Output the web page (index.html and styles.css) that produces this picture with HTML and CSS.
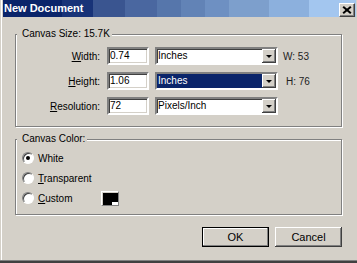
FILE: index.html
```html
<!DOCTYPE html>
<html lang="en">
<head>
    <meta charset="UTF-8">
    <meta name="viewport" content="width=device-width, initial-scale=1.0">
    <title>New Document</title>
    <link rel="stylesheet" href="styles.css">
</head>
<body>
    <div class="window">
        <div class="titlebar">
            <span class="title">New Document</span>
            <span class="close"><span class="close-x"></span></span>
        </div>

        <div class="content">
            <div class="group size">
                <span class="legend">Canvas Size: 15.7K</span>
                <div class="rows">
                    <span class="lbl"><u>W</u>idth:</span>
                    <div class="field">0.74</div>
                    <div class="select"><span class="val">Inches</span><span class="arrow"></span></div>
                    <span class="info">W: 53</span>

                    <span class="lbl"><u>H</u>eight:</span>
                    <div class="field">1.06</div>
                    <div class="select"><span class="val picked">Inches</span><span class="arrow"></span></div>
                    <span class="info info-h">H: 76</span>

                    <span class="lbl"><u>R</u>esolution:</span>
                    <div class="field">72</div>
                    <div class="select"><span class="val">Pixels/Inch</span><span class="arrow"></span></div>
                    <span class="info"></span>
                </div>
            </div>

            <div class="group color">
                <span class="legend">Canvas Color:</span>
                <div class="radio-row">
                    <span class="radio checked"></span>
                    <span class="radio-text">White</span>
                </div>
                <div class="radio-row">
                    <span class="radio"></span>
                    <span class="radio-text"><u>T</u>ransparent</span>
                </div>
                <div class="radio-row">
                    <span class="radio"></span>
                    <span class="radio-text custom-text"><u>C</u>ustom</span>
                    <span class="swatch"></span>
                </div>
            </div>

            <div class="buttons">
                <div class="btn default">OK</div>
                <div class="btn">Cancel</div>
            </div>
        </div>
    </div>
</body>
</html>
```

FILE: styles.css
```css
html, body {
    overflow: hidden;
}

body {
    margin: 0;
    padding: 0;
    background-color: #d4d0c8;
    font-family: "Liberation Sans", Arial, sans-serif;
    font-size: 10px;
    color: #000;
}

.window {
    width: 357px;
    height: 263px;
    box-sizing: border-box;
    padding-left: 3px;
    overflow: hidden;
    background-color: #d4d0c8;
    box-shadow: inset 0 -1px #404040, inset 0 -2px #404040, inset 0 -3px #808080, inset 1px 0 #d4d0c8, inset 2px 0 #fff;
}

/* Barra de titulo */
.titlebar {
    height: 17px;
    margin-right: 1px;
    display: flex;
    justify-content: space-between;
    align-items: flex-start;
    padding: 0 1px;
    background: linear-gradient(to right,
        #0a246a 0px, #0a246a 59px,
        #183378 59px, #183378 90px,
        #3a5590 90px, #3a5590 122px,
        #4a67a0 122px, #4a67a0 154px,
        #5676ab 154px, #5676ab 178px,
        #6283b6 178px, #6283b6 202px,
        #6e90c2 202px, #6e90c2 226px,
        #7d9fcc 226px, #7d9fcc 266px,
        #8cb0dd 266px, #8cb0dd 306px,
        #a3c6ef 306px);
}

.title {
    color: #fff;
    font-weight: bold;
    font-size: 11px;
    line-height: 17px;
}

.close {
    position: relative;
    flex: none;
    width: 16px;
    height: 14px;
    margin-top: 3px;
    box-sizing: border-box;
    border: 1px solid;
    border-color: #fff #404040 #404040 #fff;
    box-shadow: inset -1px -1px #808080;
    background-color: #d4d0c8;
}

/* X do botao fechar */
.close-x::before,
.close-x::after {
    content: "";
    position: absolute;
    left: 2px;
    top: 5px;
    width: 10px;
    height: 2px;
    background-color: #000;
    transform: rotate(40deg);
}

.close-x::after {
    transform: rotate(-40deg);
}

.content {
    padding: 17px 15px 0 12px;
}

/* Grupos */
.group {
    position: relative;
    border: 1px solid #808080;
    box-shadow: inset 1px 1px #fff, 1px 1px #fff;
}

.legend {
    position: absolute;
    top: -7px;
    left: 1px;
    padding: 0 2px 0 5px;
    line-height: 12px;
    background-color: #d4d0c8;
}

.size {
    padding: 12px 0 11px;
}

.rows {
    display: grid;
    grid-template-columns: 84px 49px 129px 1fr;
    grid-auto-rows: 18px;
    row-gap: 7px;
    align-items: center;
}

.lbl {
    text-align: right;
}

.field {
    width: 42px;
    height: 18px;
    margin-left: 7px;
    box-sizing: border-box;
    padding-left: 1px;
    line-height: 14px;
    background-color: #fff;
    border: 2px solid;
    border-color: #808080 #fff #fff #808080;
    box-shadow: inset 1px 1px #404040, inset -1px -1px #d4d0c8;
}

.select {
    width: 123px;
    height: 18px;
    margin-left: 6px;
    box-sizing: border-box;
    display: flex;
    background-color: #fff;
    border: 2px solid;
    border-color: #808080 #fff #fff #808080;
    box-shadow: inset 1px 1px #404040;
}

.val {
    flex: 1;
    padding-left: 1px;
    line-height: 14px;
}

.val.picked {
    background-color: #0a246a;
    color: #fff;
}

.arrow {
    width: 14px;
    height: 14px;
    box-sizing: border-box;
    display: flex;
    align-items: center;
    justify-content: center;
    background-color: #d4d0c8;
    box-shadow: inset -1px -1px #404040, inset 1px 1px #fff, inset -2px -2px #808080;
}

.arrow::after {
    content: "";
    border-left: 3px solid transparent;
    border-right: 3px solid transparent;
    border-top: 3px solid #000;
    margin-top: 1px;
}

.info {
    margin-left: 5px;
    color: #222;
}

.info-h {
    margin-left: 8px;
}

.color {
    margin-top: 12px;
    padding: 8px 0 6px 6px;
}

.radio-row {
    height: 20px;
    display: flex;
    align-items: center;
}

.radio {
    width: 12px;
    height: 12px;
    box-sizing: border-box;
    position: relative;
    border-radius: 50%;
    background-color: #fff;
    border: 1px solid;
    border-color: #808080 #fff #fff #808080;
    box-shadow: inset 1px 1px #404040;
}

.radio.checked::after {
    content: "";
    position: absolute;
    left: 3px;
    top: 3px;
    width: 4px;
    height: 4px;
    border-radius: 50%;
    background-color: #000;
}

.radio-text {
    margin-left: 4px;
}

.custom-text {
    width: 63px;
}

.swatch {
    width: 18px;
    height: 15px;
    box-sizing: border-box;
    position: relative;
    background-color: #000;
    border: 1px solid;
    border-color: #fff #808080 #808080 #fff;
    box-shadow: inset 1px 1px #d4d0c8;
}

.swatch::after {
    content: "";
    position: absolute;
    right: 0;
    bottom: 0;
    width: 5px;
    height: 2px;
    background-color: #fff;
    border-top: 1px solid #fff;
    border-left: 1px solid #fff;
}

/* Botoes */
.buttons {
    display: flex;
    justify-content: flex-end;
    gap: 6px;
    margin-top: 12px;
}

.btn {
    width: 67px;
    height: 20px;
    box-sizing: border-box;
    text-align: center;
    line-height: 20px;
    font-size: 11px;
    background-color: #d4d0c8;
    box-shadow: inset -1px -1px #404040, inset 1px 1px #fff, inset -2px -2px #808080;
}

.btn.default {
    border: 1px solid #000;
    line-height: 18px;
    box-shadow: inset -1px -1px #808080, inset 1px 1px #fff;
}
```
